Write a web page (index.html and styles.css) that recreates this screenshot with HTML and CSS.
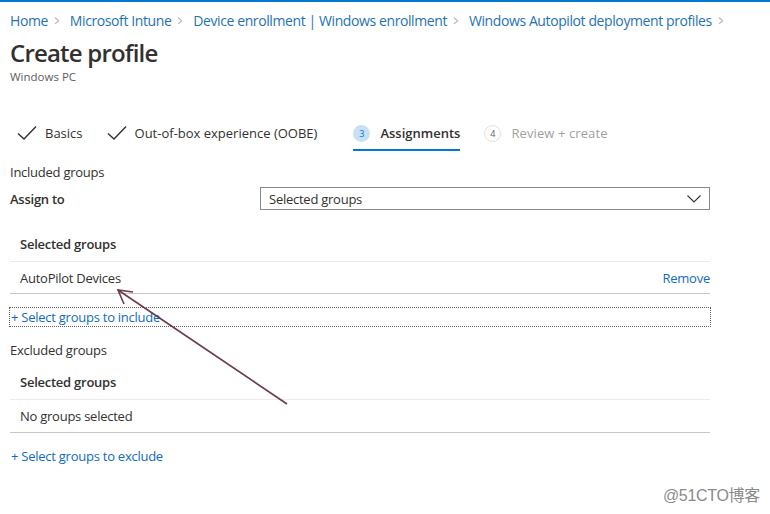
FILE: index.html
```html
<!DOCTYPE html>
<html lang="en">
<head>
    <meta charset="UTF-8">
    <title>Create profile</title>
    <link rel="stylesheet" href="styles.css">
</head>
<body>
    <div class="topbar"></div>

    <div class="page">
        <nav class="crumbs">
            <a href="#">Home</a><span class="sep">&gt;</span>
            <a href="#">Microsoft Intune</a><span class="sep">&gt;</span>
            <a href="#">Device enrollment | Windows enrollment</a><span class="sep">&gt;</span>
            <a href="#">Windows Autopilot deployment profiles</a><span class="sep">&gt;</span>
        </nav>

        <h1 class="title">Create profile</h1>
        <div class="subtitle">Windows PC</div>

        <!-- wizard steps -->
        <div class="tabs">
            <div class="tab done">
                <svg class="check" width="20" height="16" viewBox="0 0 20 16"><path d="M1 8.5 L7 14 L19 1.5" fill="none" stroke="#323130" stroke-width="1.4"/></svg>
                <span>Basics</span>
            </div>
            <div class="tab done">
                <svg class="check" width="20" height="16" viewBox="0 0 20 16"><path d="M1 8.5 L7 14 L19 1.5" fill="none" stroke="#323130" stroke-width="1.4"/></svg>
                <span>Out-of-box experience (OOBE)</span>
            </div>
            <div class="tab active">
                <span class="num">3</span>
                <span>Assignments</span>
            </div>
            <div class="tab todo">
                <span class="num">4</span>
                <span>Review + create</span>
            </div>
        </div>

        <div class="section-title">Included groups</div>
        <div class="field">
            <label class="field-label">Assign to</label>
            <div class="select">
                <span>Selected groups</span>
                <svg width="14" height="8" viewBox="0 0 14 8"><path d="M0.5 0.5 L7 7 L13.5 0.5" fill="none" stroke="#323130" stroke-width="1.1"/></svg>
            </div>
        </div>

        <div class="grid">
            <div class="grid-head">Selected groups</div>
            <div class="grid-row">
                <span>AutoPilot Devices</span>
                <a href="#" class="link">Remove</a>
            </div>
        </div>
        <a href="#" class="add focused">+ Select groups to include</a>

        <div class="section-title excluded">Excluded groups</div>
        <div class="grid">
            <div class="grid-head">Selected groups</div>
            <div class="grid-row tall">
                <span>No groups selected</span>
            </div>
        </div>
        <a href="#" class="add">+ Select groups to exclude</a>
    </div>

    <!-- annotation arrow drawn over the page -->
    <svg class="arrow" width="770" height="514" viewBox="0 0 770 514">
        <path d="M287 404 L118 290" stroke="#6b3a4c" stroke-width="1.6" fill="none"/>
        <path d="M133 292 L118 290 L124 304" stroke="#6b3a4c" stroke-width="1.6" fill="none"/>
    </svg>

    <div class="watermark">@51CTO博客</div>
</body>
</html>
```

FILE: styles.css
```css
body {
    margin: 0;
    font-family: "Open Sans", "Noto Sans", sans-serif;
    font-size: 13px;
    letter-spacing: -0.25px;
    color: #323130;
    background: #fff;
    position: relative;
    height: 514px;
    overflow: hidden;
}

a {
    text-decoration: none;
}

.topbar {
    height: 2px;
    background: #0078d4;
}

.page {
    width: 700px;
    padding: 0 10px;
}

.crumbs {
    margin-top: 9px;
    line-height: 20px;
    font-size: 14px;
    white-space: nowrap;
    letter-spacing: -0.4px;
}

.crumbs a {
    color: #1f72b3;
}

.crumbs .sep {
    display: inline-block;
    color: #a19f9d;
    margin: 0 6px 0 5px;
    transform: scaleX(0.6);
}

.title {
    margin: 6px 0 0;
    font-size: 24px;
    line-height: 32px;
    font-weight: 600;
    letter-spacing: -0.8px;
}

.subtitle {
    font-size: 11.5px;
    line-height: 16px;
    color: #605e5c;
    letter-spacing: 0;
}

.tabs {
    display: flex;
    margin-top: 38px;
    padding-left: 7px;
    gap: 24px;
}

.tab {
    display: flex;
    align-items: center;
    gap: 8px;
    font-size: 13px;
    line-height: 20px;
    padding-bottom: 6px;
    border-bottom: 2px solid transparent;
    letter-spacing: 0;
}

.tab.active {
    font-weight: 600;
    border-bottom-color: #0078d4;
    margin-left: 12px;
    gap: 10px;
}

.tab.todo {
    color: #a19f9d;
    gap: 10px;
    letter-spacing: 0.1px;
}

.num {
    width: 17px;
    height: 17px;
    border-radius: 50%;
    font-size: 9px;
    line-height: 17px;
    text-align: center;
    font-weight: 400;
    box-sizing: border-box;
}

.active .num {
    background: #c7e0f4;
    color: #0078d4;
}

.todo .num {
    border: 1px solid #e1dfdd;
    color: #605e5c;
    line-height: 15px;
}

.section-title {
    font-size: 13px;
    line-height: 20px;
    margin-top: 11px;
}

.section-title.excluded {
    margin-top: 14px;
}

.field {
    display: grid;
    grid-template-columns: 250px 1fr;
    align-items: center;
    margin-top: 5px;
}

.field-label {
    font-weight: 600;
}

.select {
    height: 23px;
    box-sizing: border-box;
    border: 1px solid #8a8886;
    display: flex;
    align-items: center;
    justify-content: space-between;
    padding: 0 8px;
}

.grid {
    margin-top: 17px;
}

.grid-head {
    font-weight: 600;
    line-height: 18px;
    padding: 8px 10px;
    border-bottom: 1px solid #edebe9;
}

.grid-row {
    height: 31px;
    display: flex;
    align-items: center;
    justify-content: space-between;
    padding: 0 0 0 10px;
    border-bottom: 1px solid #c8c6c4;
}

.grid-row.tall {
    height: 32px;
}

.link,
.add {
    color: #0f6cbd;
}

.add {
    display: block;
    line-height: 18px;
    margin-top: 14px;
    padding-left: 1px;
}

.add.focused {
    height: 18px;
    box-sizing: border-box;
    line-height: 18px;
    outline: 1px dotted #605e5c;
}

.section-title + .grid {
    margin-top: 5px;
}

.arrow {
    position: absolute;
    left: 0;
    top: 0;
    pointer-events: none;
}

.watermark {
    position: absolute;
    right: 10px;
    bottom: 8px;
    font-size: 16px;
    letter-spacing: -0.3px;
    color: #8a8a8a;
    font-family: "Liberation Sans", "Noto Sans CJK SC", sans-serif;
}
```
